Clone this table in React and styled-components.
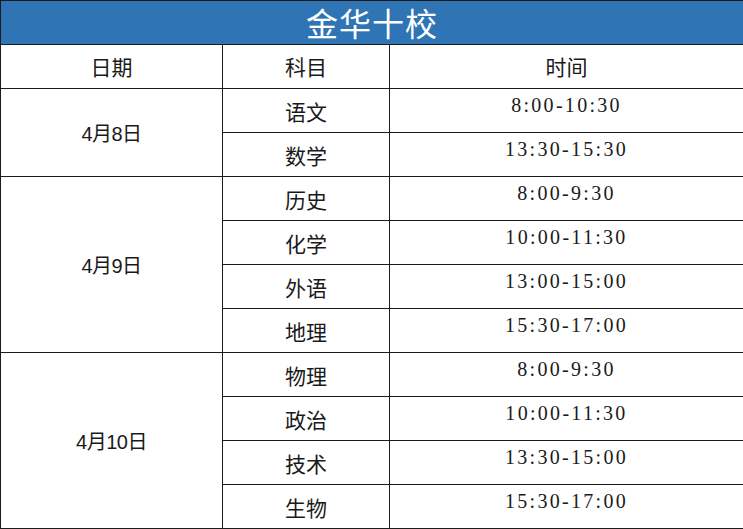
import styled, { createGlobalStyle } from 'styled-components'

const GlobalStyle = createGlobalStyle`
  html, body {
    margin: 0;
    padding: 0;
    background: #ffffff;
  }
`

const Table = styled.table`
  width: 743px;
  border-collapse: collapse;
  table-layout: fixed;
  color: #1a1a1a;
`

const TitleCell = styled.th`
  height: 43px;
  padding: 0;
  background-color: #2f75b5;
  border: 1px solid #1b1b1b;
  color: #ffffff;
  font-family: "Noto Sans CJK SC", sans-serif;
  font-weight: 400;
  font-size: 32px;
  letter-spacing: 1px;
  line-height: 43px;
  text-align: center;
`

const HeadCell = styled.th`
  height: 43px;
  padding: 0;
  border: 1px solid #1b1b1b;
  font-family: "Noto Sans CJK SC", sans-serif;
  font-weight: 400;
  font-size: 21px;
  line-height: 1;
  text-align: center;
  vertical-align: middle;
`

const Cell = styled.td`
  height: 43px;
  padding: 0;
  border: 1px solid #1b1b1b;
  text-align: center;
  vertical-align: middle;
  line-height: 1;
`

const Shifted = styled.span`
  display: inline-block;
  position: relative;
  top: ${p => p.$shift || 0}px;
`

const SubjectText = styled(Shifted)`
  font-family: "Noto Sans CJK SC", sans-serif;
  font-size: 21px;
`

const TimeText = styled(Shifted)`
  font-family: "Liberation Serif", serif;
  font-size: 20px;
  letter-spacing: 2.3px;
`

const DateText = styled(Shifted)`
  font-family: "Liberation Sans Narrow", "Liberation Sans", "Noto Sans CJK SC", sans-serif;
  font-size: 20px;
  letter-spacing: -0.5px;
`

const days = [
  {
    date: '4月8日',
    items: [
      ['语文', '8:00-10:30'],
      ['数学', '13:30-15:30'],
    ],
  },
  {
    date: '4月9日',
    items: [
      ['历史', '8:00-9:30'],
      ['化学', '10:00-11:30'],
      ['外语', '13:00-15:00'],
      ['地理', '15:30-17:00'],
    ],
  },
  {
    date: '4月10日',
    items: [
      ['物理', '8:00-9:30'],
      ['政治', '10:00-11:30'],
      ['技术', '13:30-15:00'],
      ['生物', '15:30-17:00'],
    ],
  },
]

export default function App() {
  return (
    <>
      <GlobalStyle />
      <Table>
        <colgroup>
          <col style={{ width: 222 }} />
          <col style={{ width: 167 }} />
          <col style={{ width: 354 }} />
        </colgroup>
        <thead>
          <tr>
            <TitleCell colSpan={3}>金华十校</TitleCell>
          </tr>
          <tr>
            <HeadCell>日期</HeadCell>
            <HeadCell>科目</HeadCell>
            <HeadCell>时间</HeadCell>
          </tr>
        </thead>
        <tbody>
          {days.map(day =>
            day.items.map(([subject, time], i) => (
              <tr key={day.date + subject}>
                {i === 0 && (
                  <Cell rowSpan={day.items.length}>
                    <DateText $shift={1}>{day.date}</DateText>
                  </Cell>
                )}
                <Cell>
                  <SubjectText $shift={1}>{subject}</SubjectText>
                </Cell>
                <Cell>
                  <TimeText $shift={-6}>{time}</TimeText>
                </Cell>
              </tr>
            ))
          )}
        </tbody>
      </Table>
    </>
  )
}
